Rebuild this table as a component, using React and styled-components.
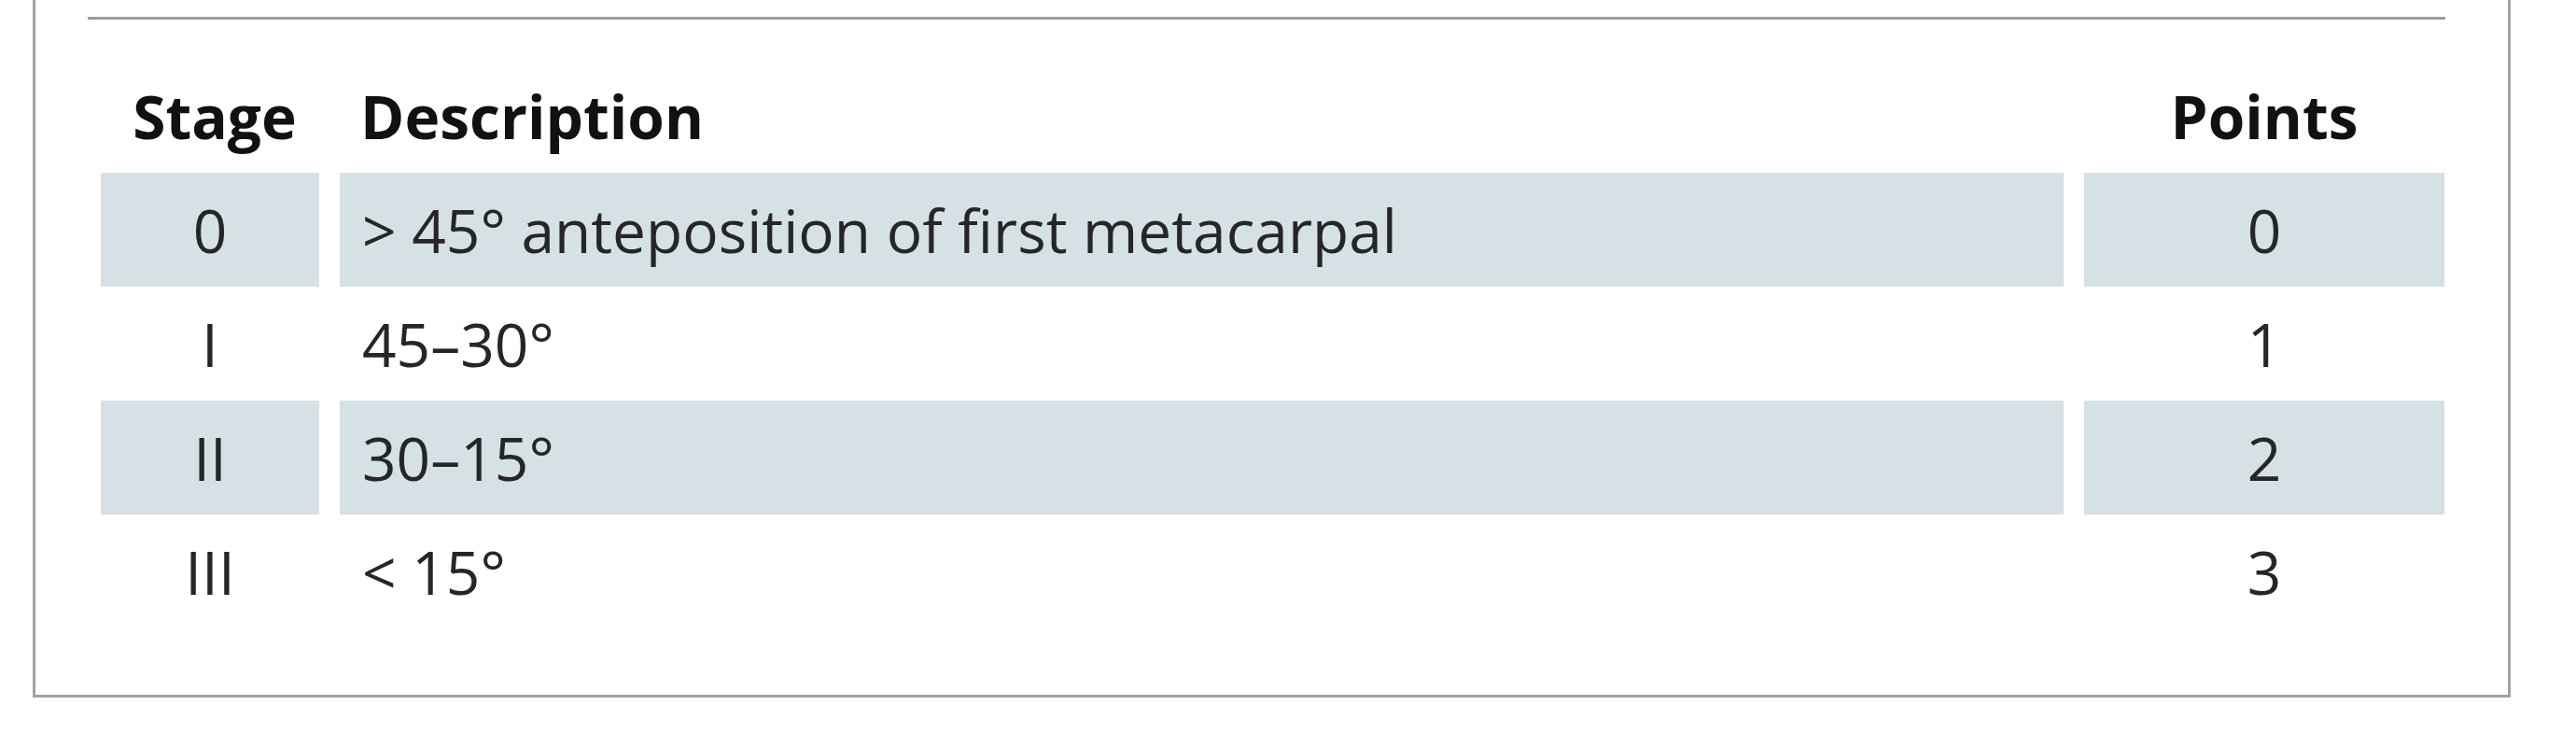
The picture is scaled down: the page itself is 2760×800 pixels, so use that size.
import React from "react";
import styled, { createGlobalStyle } from "styled-components";

const GlobalStyle = createGlobalStyle`
  html, body {
    margin: 0;
    padding: 0;
    background: #ffffff;
  }
  body {
    font-family: "Open Sans", "Liberation Sans", sans-serif;
    color: #262628;
  }
`;

const Frame = styled.section`
  box-sizing: border-box;
  width: 2655px;
  margin-left: 35px;
  border: 3px solid #a2a2a2;
  border-top: none;
  padding: 18px 68px 71px 70px;
`;

const Rule = styled.div`
  height: 3px;
  margin: 0 -1px 0 -14px;
  background: #9d9d9d;
`;

const Table = styled.div`
  display: grid;
  grid-template-columns: 234px 1fr 386px;
  grid-auto-rows: 122px;
  column-gap: 22px;
  margin-top: 42px;
`;

const Cell = styled.div`
  display: flex;
  align-items: center;
  justify-content: ${({ align }) => (align === "left" ? "flex-start" : "center")};
  padding: 0 24px;
  background: ${({ shaded }) => (shaded ? "#d5e1e4" : "transparent")};
  font-size: 64px;
  font-weight: 400;
  white-space: nowrap;
`;

const HeadCell = styled(Cell)`
  font-weight: 700;
  color: #111111;
  padding-left: ${({ align, nudge }) => (align === "left" ? "22px" : nudge ? "34px" : "24px")};
`;

const rows = [
  { stage: "0", description: "> 45° anteposition of first metacarpal", points: "0" },
  { stage: "I", description: "45–30°", points: "1" },
  { stage: "II", description: "30–15°", points: "2" },
  { stage: "III", description: "< 15°", points: "3" },
];

export default function App() {
  return (
    <>
      <GlobalStyle />
      <Frame>
        <Rule />
        <Table>
          <HeadCell nudge>Stage</HeadCell>
          <HeadCell align="left">Description</HeadCell>
          <HeadCell>Points</HeadCell>
          {rows.map((row, i) => (
            <React.Fragment key={row.stage}>
              <Cell shaded={i % 2 === 0}>{row.stage}</Cell>
              <Cell shaded={i % 2 === 0} align="left">{row.description}</Cell>
              <Cell shaded={i % 2 === 0}>{row.points}</Cell>
            </React.Fragment>
          ))}
        </Table>
      </Frame>
    </>
  );
}
